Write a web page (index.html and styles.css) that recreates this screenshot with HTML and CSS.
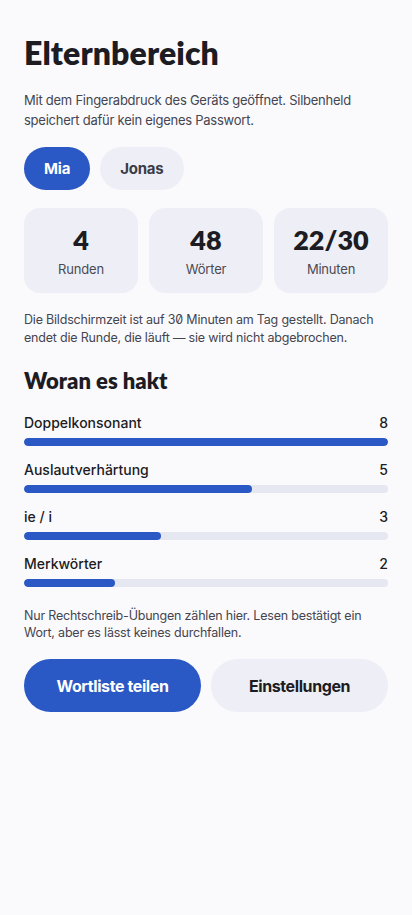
FILE: index.html
```html
<!DOCTYPE html>
<html lang="de">
<head>
    <meta charset="UTF-8">
    <meta name="viewport" content="width=device-width, initial-scale=1.0">
    <title>Elternbereich</title>
    <link rel="stylesheet" href="styles.css">
</head>
<body>
    <main class="parents">
        <h1>Elternbereich</h1>
        <p class="intro">Mit dem Fingerabdruck des Geräts geöffnet. Silbenheld speichert dafür kein eigenes Passwort.</p>

        <div class="kids">
            <button class="chip active">Mia</button>
            <button class="chip">Jonas</button>
        </div>

        <div class="stats">
            <div class="stat"><span class="value">4</span><span class="label">Runden</span></div>
            <div class="stat"><span class="value">48</span><span class="label">Wörter</span></div>
            <div class="stat"><span class="value">22/30</span><span class="label">Minuten</span></div>
        </div>

        <p class="note">Die Bildschirmzeit ist auf 30 Minuten am Tag gestellt. Danach endet die Runde, die läuft — sie wird nicht abgebrochen.</p>

        <h2>Woran es hakt</h2>
        <ul class="trouble">
            <li>
                <div class="row"><span>Doppelkonsonant</span><span>8</span></div>
                <div class="track"><div class="fill" style="width: 100%"></div></div>
            </li>
            <li>
                <div class="row"><span>Auslautverhärtung</span><span>5</span></div>
                <div class="track"><div class="fill" style="width: 62.5%"></div></div>
            </li>
            <li>
                <div class="row"><span>ie / i</span><span>3</span></div>
                <div class="track"><div class="fill" style="width: 37.5%"></div></div>
            </li>
            <li>
                <div class="row"><span>Merkwörter</span><span>2</span></div>
                <div class="track"><div class="fill" style="width: 25%"></div></div>
            </li>
        </ul>

        <p class="note small">Nur Rechtschreib-Übungen zählen hier. Lesen bestätigt ein Wort, aber es lässt keines durchfallen.</p>

        <div class="actions">
            <button class="btn primary">Wortliste teilen</button>
            <button class="btn">Einstellungen</button>
        </div>
    </main>
</body>
</html>
```

FILE: styles.css
```css
body {
    margin: 0;
    background-color: #fafafd;
    font-family: Inter, 'Noto Sans', sans-serif;
    font-feature-settings: "zero";
    color: #1c1c22;
}

.parents {
    padding: 33px 24px 40px;
}

h1 {
    font-family: Lato, 'Noto Sans', sans-serif;
    font-size: 32px;
    font-weight: 800;
    margin: 0 0 18px;
    letter-spacing: 0.1px;
}

.intro {
    font-size: 13px;
    line-height: 20px;
    letter-spacing: -0.25px;
    color: #45454f;
    margin: 0 0 17px;
}

.kids {
    display: flex;
    gap: 10px;
    margin-bottom: 18px;
}

button {
    font-family: inherit;
    border: none;
    cursor: pointer;
}

.chip {
    height: 43px;
    padding: 0 20px;
    border-radius: 22px;
    background-color: #eeeff6;
    color: #3c3c46;
    font-size: 15px;
    font-weight: 700;
    letter-spacing: -0.2px;
}

.chip.active {
    background-color: #2a58c4;
    color: white;
}

.stats {
    display: grid;
    grid-template-columns: repeat(3, 1fr);
    gap: 11px;
    margin-bottom: 18px;
}

.stat {
    height: 85px;
    border-radius: 16px;
    background-color: #eeeff6;
    display: flex;
    flex-direction: column;
    align-items: center;
    justify-content: center;
}

.stat .value {
    font-family: Lato, 'Noto Sans', sans-serif;
    font-size: 27px;
    font-weight: 800;
    line-height: 32px;
}

.stat .label {
    font-size: 13px;
    letter-spacing: -0.2px;
    color: #4a4a54;
    margin-top: 5px;
}

.note {
    font-size: 12.5px;
    line-height: 18px;
    letter-spacing: -0.2px;
    color: #45454f;
    margin: 0 0 20px;
}

.note.small {
    line-height: 17px;
    margin-bottom: 0;
}

h2 {
    font-family: Lato, 'Noto Sans', sans-serif;
    font-size: 22px;
    font-weight: 800;
    margin: 0 0 20px;
}

.trouble {
    list-style: none;
    margin: 0 0 20px;
    padding: 0;
    display: flex;
    flex-direction: column;
    gap: 15px;
}

.row {
    display: flex;
    justify-content: space-between;
    font-size: 14px;
    font-weight: 500;
    line-height: 18px;
    margin-bottom: 6px;
}

.track {
    height: 8px;
    border-radius: 4px;
    background-color: #e6e8f1;
    overflow: hidden;
}

.fill {
    height: 100%;
    border-radius: 4px;
    background-color: #2a58c4;
}

.actions {
    display: grid;
    grid-template-columns: 1fr 1fr;
    gap: 10px;
    margin-top: 18px;
}

.btn {
    height: 53px;
    border-radius: 27px;
    background-color: #eeeff6;
    color: #1c1c22;
    font-size: 16px;
    font-weight: 700;
    letter-spacing: -0.4px;
}

.btn.primary {
    background-color: #2a58c4;
    color: white;
}
```
